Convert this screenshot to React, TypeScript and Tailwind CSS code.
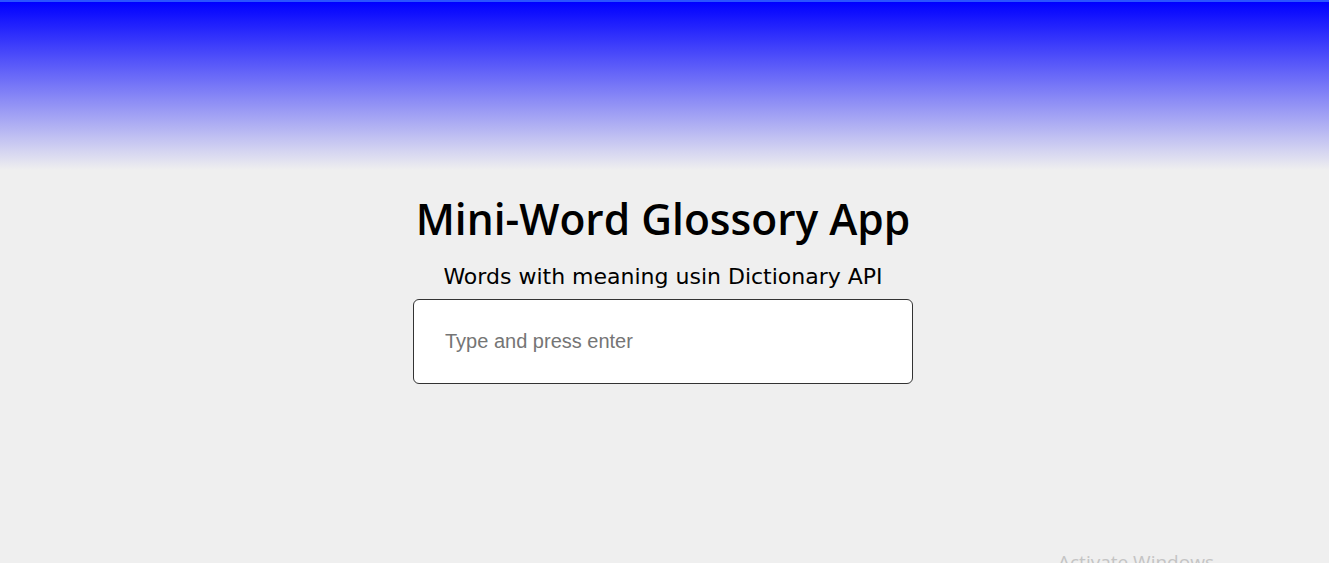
import React from "react";

export default function App() {
  return (
    <div className="relative h-[563px] w-full overflow-hidden bg-[#efefef]">
      <div className="h-[2px] bg-[#2a55ff]" />
      <div className="h-[168px] bg-[linear-gradient(to_bottom,#0000ff,#efefef)]" />
      <div className="flex flex-col items-center pr-[3px]">
        <h1 className="mt-[21px] text-[42.5px] font-semibold leading-[55px] text-black" style={{ fontFamily: '"Open Sans", "Noto Sans", sans-serif' }}>
          Mini-Word Glossory App
        </h1>
        <p className="mt-[17px] text-[22px] leading-[28px] text-black" style={{ fontFamily: '"DejaVu Sans", sans-serif' }}>
          Words with meaning usin Dictionary API
        </p>
        <input
          type="text"
          placeholder="Type and press enter"
          className="mt-[8px] h-[85px] w-[500px] rounded-[6px] border border-[#333] bg-white px-[31px] text-[20px] outline-none placeholder:text-[#757575]"
          style={{ fontFamily: '"Liberation Sans", Arial, sans-serif' }}
        />
      </div>
      <div className="absolute left-[1058px] top-[548px] text-[19px] leading-[28px] text-[#c4c4c4]" style={{ fontFamily: '"Open Sans", sans-serif' }}>
        Activate Windows
      </div>
    </div>
  );
}
